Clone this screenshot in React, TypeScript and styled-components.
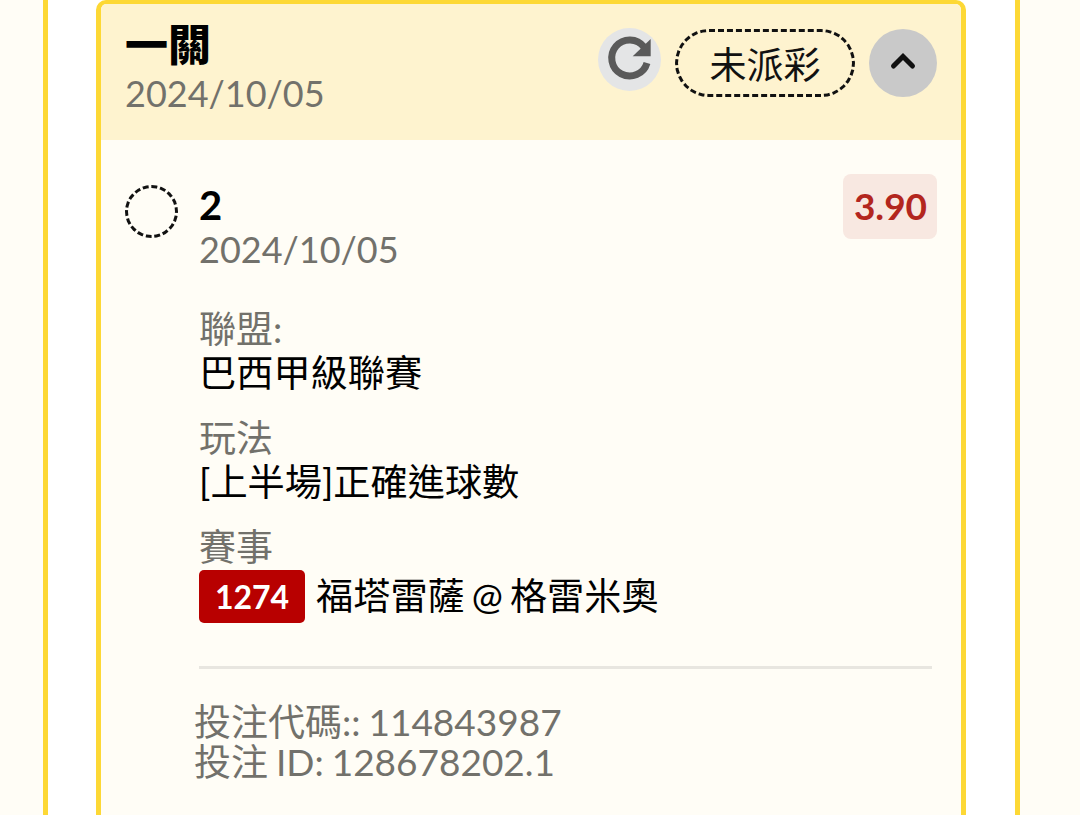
import React from 'react';
import styled, { createGlobalStyle } from 'styled-components';

const GlobalStyle = createGlobalStyle`
  html, body {
    margin: 0;
    padding: 0;
    height: 815px;
    overflow: hidden;
    background: #fffdf6;
    font-family: Lato, "Noto Sans CJK TC", sans-serif;
  }
`;

const Shell = styled.div`
  box-sizing: border-box;
  width: 977px;
  height: 815px;
  margin-left: 43px;
  padding: 0 49px 0 48px;
  background: #ffffff;
  border-left: 5px solid #fdd835;
  border-right: 5px solid #fdd835;
  overflow: hidden;
`;

const Card = styled.div`
  box-sizing: border-box;
  width: 870px;
  height: 860px;
  border: 5px solid #fdd835;
  border-top-width: 4px;
  border-radius: 10px;
  background: #fffdf6;
  overflow: hidden;
`;

const Header = styled.div`
  box-sizing: border-box;
  height: 136px;
  padding: 25px 24px 0 24px;
  display: flex;
  justify-content: space-between;
  align-items: flex-start;
  background: #fef3cf;
`;

const HeaderText = styled.div`
  display: flex;
  flex-direction: column;
  margin-top: -5px;
`;

const Title = styled.div`
  font-size: 43px;
  line-height: 42px;
  font-weight: 900;
  color: #000;
`;

const DateText = styled.div`
  font-size: 36px;
  line-height: 42px;
  color: #72716b;
`;

const HeaderDate = styled(DateText)`
  margin-top: 6px;
`;

const Actions = styled.div`
  display: flex;
  align-items: flex-start;
  gap: 14px;
`;

const RefreshButton = styled.div`
  width: 63px;
  height: 63px;
  margin-top: -1px;
  border-radius: 50%;
  background: #e4e5e6;
`;

const StatusPill = styled.div`
  box-sizing: border-box;
  width: 180px;
  height: 68px;
  border: 3px dashed #111;
  border-radius: 34px;
  display: flex;
  align-items: center;
  justify-content: center;
  font-size: 37px;
  color: #111;
`;

const ToggleButton = styled.div`
  width: 68px;
  height: 68px;
  border-radius: 50%;
  background: #c9c9c9;
`;

const Body = styled.div`
  padding: 34px 24px 0 24px;
`;

const BetRow = styled.div`
  display: flex;
  align-items: flex-start;
`;

const Radio = styled.div`
  box-sizing: border-box;
  flex-shrink: 0;
  width: 53px;
  height: 53px;
  margin-top: 11px;
  margin-right: 21px;
  border: 3px dashed #111;
  border-radius: 50%;
`;

const BetInfo = styled.div`
  flex: 1;
  min-width: 0;
`;

const BetHeader = styled.div`
  display: flex;
  justify-content: space-between;
  align-items: flex-start;
  margin-bottom: 37px;
`;

const Selection = styled.div`
  padding-top: 8px;
  font-size: 40px;
  line-height: 46px;
  font-weight: 700;
  color: #000;
`;

const Odds = styled.div`
  box-sizing: border-box;
  width: 94px;
  height: 65px;
  padding: 0 0 2px 1px;
  border-radius: 8px;
  background: #f8e8e1;
  color: #b3261e;
  font-size: 37px;
  font-weight: 700;
  display: flex;
  align-items: center;
  justify-content: center;
`;

const Field = styled.div`
  & + & {
    margin-top: 21px;
  }
`;

const FieldLabel = styled.div`
  font-size: 37px;
  line-height: 44px;
  color: #72716b;
`;

const FieldValue = styled.div`
  display: flex;
  align-items: center;
  font-size: 37.2px;
  line-height: 44px;
  word-spacing: -2.5px;
  color: #000;
`;

const MatchBadge = styled.span`
  box-sizing: border-box;
  width: 106px;
  height: 53px;
  margin-top: 1px;
  margin-right: 11px;
  border-radius: 5px;
  background: #b80000;
  color: #fff;
  font-size: 32px;
  font-weight: 700;
  display: flex;
  align-items: center;
  justify-content: center;
`;

const Divider = styled.div`
  height: 3px;
  width: 733px;
  margin-top: 43px;
  background: #e8e6e0;
`;

const Footer = styled.div`
  margin: 33px 0 0 -5px;
  font-size: 37px;
  line-height: 40px;
  word-spacing: -1.5px;
  color: #72716b;
`;

export default function App() {
  return (
    <>
      <GlobalStyle />
      <Shell>
        <Card>
          <Header>
            <HeaderText>
              <Title>一關</Title>
              <HeaderDate>2024/10/05</HeaderDate>
            </HeaderText>
            <Actions>
              <RefreshButton>
                <svg width="63" height="63" viewBox="0 0 63 63">
                  <path d="M46 19A18 18 0 1 0 49 35" fill="none" stroke="#5a5a5a" strokeWidth="7" />
                  <path d="M52.7 11V28.3H34.7z" fill="#5a5a5a" />
                </svg>
              </RefreshButton>
              <StatusPill>未派彩</StatusPill>
              <ToggleButton>
                <svg width="68" height="68" viewBox="0 0 68 68">
                  <path d="M24.5 37 34 27.5 43.5 37" fill="none" stroke="#111" strokeWidth="5" strokeLinecap="round" />
                </svg>
              </ToggleButton>
            </Actions>
          </Header>
          <Body>
            <BetRow>
              <Radio />
              <BetInfo>
                <BetHeader>
                  <div>
                    <Selection>2</Selection>
                    <DateText>2024/10/05</DateText>
                  </div>
                  <Odds>3.90</Odds>
                </BetHeader>
                <Field>
                  <FieldLabel>聯盟:</FieldLabel>
                  <FieldValue>巴西甲級聯賽</FieldValue>
                </Field>
                <Field>
                  <FieldLabel>玩法</FieldLabel>
                  <FieldValue>[上半場]正確進球數</FieldValue>
                </Field>
                <Field>
                  <FieldLabel>賽事</FieldLabel>
                  <FieldValue>
                    <MatchBadge>1274</MatchBadge>
                    福塔雷薩 @ 格雷米奧
                  </FieldValue>
                </Field>
                <Divider />
                <Footer>
                  <div>投注代碼:: 114843987</div>
                  <div>投注 ID: 128678202.1</div>
                </Footer>
              </BetInfo>
            </BetRow>
          </Body>
        </Card>
      </Shell>
    </>
  );
}
